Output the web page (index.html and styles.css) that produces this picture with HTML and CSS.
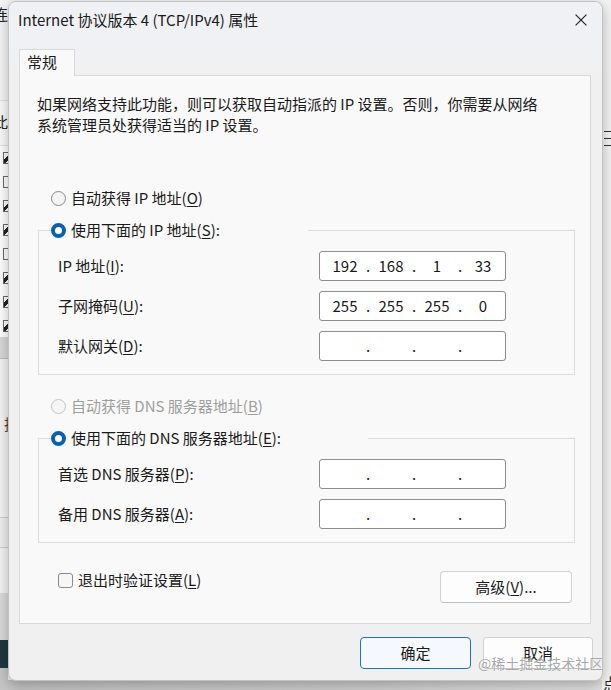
FILE: index.html
```html
<!DOCTYPE html>
<html lang="zh-CN">
<head>
<meta charset="utf-8">
<title>Internet 协议版本 4 (TCP/IPv4) 属性</title>
<link rel="stylesheet" href="styles.css">
</head>
<body>
<div class="desktop">
  <div class="back-bottom"></div>
  <div class="back-left">
    <div class="seg seg-a"><span class="frag frag-lian">连</span></div>
    <div class="seg seg-b"><span class="frag frag-ci">此</span></div>
    <div class="seg seg-c">
      <div class="cb-item"><span class="mini-cb on"></span></div>
      <div class="cb-item"><span class="mini-cb"></span></div>
      <div class="cb-item"><span class="mini-cb on"></span></div>
      <div class="cb-item"><span class="mini-cb on"></span></div>
      <div class="cb-item"><span class="mini-cb"></span></div>
      <div class="cb-item"><span class="mini-cb on"></span></div>
      <div class="cb-item"><span class="mini-cb on"></span></div>
      <div class="cb-item"><span class="mini-cb on"></span></div>
    </div>
    <div class="seg seg-d"></div>
    <div class="seg seg-e"></div>
    <div class="seg seg-f"><span class="frag frag-ji">技</span></div>
    <div class="seg seg-g"></div>
    <div class="seg seg-h"></div>
    <div class="seg seg-i"></div>
    <div class="seg seg-j"></div>
    <div class="seg seg-k"></div>
    <div class="seg seg-l"></div>
  </div>
  <div class="back-right">
    <div class="menu-lines"><span></span><span></span><span></span></div>
    <div class="frag-dian">点</div>
  </div>

  <div class="window">
    <div class="titlebar">
      <span class="title">Internet 协议版本 4 (TCP/IPv4) 属性</span>
      <svg class="close" width="12" height="12" viewBox="0 0 12 12"><path d="M0.6 0.6 L11.4 11.4 M11.4 0.6 L0.6 11.4" stroke="#1a1a1a" stroke-width="1.1" fill="none"/></svg>
    </div>
    <div class="content">
      <div class="tabs"><div class="tab">常规</div></div>
      <div class="panel">
        <p class="desc">如果网络支持此功能，则可以获取自动指派的 IP 设置。否则，你需要从网络<br>系统管理员处获得适当的 IP 设置。</p>

        <div class="radio-row first"><span class="radio"></span><span>自动获得 IP 地址(<u>O</u>)</span></div>

        <fieldset class="group">
          <legend class="legend legend-ip"><span class="radio checked"></span><span>使用下面的 IP 地址(<u>S</u>):</span></legend>
          <div class="rows">
            <div class="field-label">IP 地址(<u>I</u>):</div>
            <div class="ipbox"><span class="seg-n">192</span><span class="dot">.</span><span class="seg-n">168</span><span class="dot">.</span><span class="seg-n">1</span><span class="dot">.</span><span class="seg-n">33</span></div>
            <div class="field-label">子网掩码(<u>U</u>):</div>
            <div class="ipbox"><span class="seg-n">255</span><span class="dot">.</span><span class="seg-n">255</span><span class="dot">.</span><span class="seg-n">255</span><span class="dot">.</span><span class="seg-n">0</span></div>
            <div class="field-label">默认网关(<u>D</u>):</div>
            <div class="ipbox"><span class="seg-n"></span><span class="dot">.</span><span class="seg-n"></span><span class="dot">.</span><span class="seg-n"></span><span class="dot">.</span><span class="seg-n"></span></div>
          </div>
        </fieldset>

        <div class="radio-row second disabled"><span class="radio"></span><span>自动获得 DNS 服务器地址(<u>B</u>)</span></div>

        <fieldset class="group group-dns">
          <legend class="legend legend-dns"><span class="radio checked"></span><span>使用下面的 DNS 服务器地址(<u>E</u>):</span></legend>
          <div class="rows">
            <div class="field-label">首选 DNS 服务器(<u>P</u>):</div>
            <div class="ipbox"><span class="seg-n"></span><span class="dot">.</span><span class="seg-n"></span><span class="dot">.</span><span class="seg-n"></span><span class="dot">.</span><span class="seg-n"></span></div>
            <div class="field-label">备用 DNS 服务器(<u>A</u>):</div>
            <div class="ipbox"><span class="seg-n"></span><span class="dot">.</span><span class="seg-n"></span><span class="dot">.</span><span class="seg-n"></span><span class="dot">.</span><span class="seg-n"></span></div>
          </div>
        </fieldset>

        <div class="bottom-row">
          <div class="check-label"><span class="checkbox"></span><span>退出时验证设置(<u>L</u>)</span></div>
          <button class="btn btn-adv" type="button">高级(<u>V</u>)...</button>
        </div>
      </div>
    </div>
    <div class="footer">
      <button class="btn btn-ok" type="button">确定</button>
      <button class="btn btn-cancel" type="button">取消</button>
    </div>
  </div>

  <div class="watermark">@稀土掘金技术社区</div>
</div>
</body>
</html>
```
FILE: styles.css
```css
* { box-sizing: border-box; }
html, body { margin: 0; padding: 0; }
body {
  font-family: "Noto Sans CJK SC", "Noto Sans", sans-serif;
  font-size: 15px;
  color: #1a1a1a;
  background: #f3f3f3;
}
u { text-decoration: underline; text-underline-offset: 2px; text-decoration-thickness: 1px; }

.desktop {
  position: relative;
  width: 611px;
  height: 690px;
  overflow: hidden;
  background: #f3f3f3;
}

/* ---------- background windows ---------- */
.back-bottom {
  position: absolute;
  left: 0; bottom: 0;
  width: 611px; height: 10px;
  background: linear-gradient(to right, #c4c4c4, #cfcfcf 60%, #e2e2e2);
}
.back-left {
  position: absolute;
  left: 0; top: 0;
  width: 8px; height: 690px;
  display: flex;
  flex-direction: column;
  overflow: hidden;
}
.seg { flex: none; overflow: hidden; }
.seg-a { height: 100px; background: #f6f6f6; padding-top: 4px; }
.seg-b { height: 45px; background: #fafafa; border-top: 1px solid #e0e0e0; padding-top: 11px; }
.seg-c { height: 192px; background: #fff; border-top: 1px solid #e0e0e0; }
.seg-d { height: 21px; background: #d9d9d9; }
.seg-e { height: 52px; background: #f4f4f4; border-top: 1px solid #bdbdbd; }
.seg-f { height: 30px; background: #f4f4f4; padding-top: 4px; }
.seg-g { height: 77px; background: #f4f4f4; }
.seg-h { height: 30px; background: #efefef; border-top: 1px solid #cfcfcf; }
.seg-i { height: 46px; background: #f4f4f4; border-top: 1px solid #cfcfcf; }
.seg-j { height: 47px; background: #dadada; }
.seg-k { height: 28px; background: #1f3a3f; }
.seg-l { height: 22px; background: #c6c6c6; }
.frag { display: block; white-space: nowrap; line-height: 20px; font-size: 15px; color: #222; }
.frag-lian, .frag-ci { margin-left: -7px; }
.frag-ji { margin-left: 4px; color: #5a3a1a; }
.cb-item { height: 24px; display: flex; align-items: center; }
.mini-cb {
  display: block;
  width: 12px; height: 12px;
  margin-left: 3px;
  border: 1px solid #6a6a6a;
  background: #fff;
  flex: none;
}
.mini-cb.on { background: linear-gradient(135deg, #fff 30%, #222 30%, #222 55%, #fff 55%); }

.back-right {
  position: absolute;
  right: 0; top: 0;
  width: 9px; height: 690px;
  display: flex;
  flex-direction: column;
  background: #f4f4f4;
}
.menu-lines {
  margin-top: 131px;
  margin-left: 2px;
  display: flex;
  flex-direction: column;
  gap: 6px;
}
.menu-lines span { display: block; height: 1px; background: #333; width: 10px; }
.frag-dian {
  margin-top: auto;
  margin-left: 1px;
  line-height: 18px;
  height: 16px;
  font-size: 15px;
  white-space: nowrap;
  color: #222;
}

/* ---------- dialog window ---------- */
.window {
  position: absolute;
  left: 8px; top: 1px;
  width: 595px; height: 680px;
  border: 1px solid #c2c2c2;
  border-radius: 8px;
  background: #f0f0f0;
  box-shadow: 0 4px 14px rgba(0, 0, 0, 0.28);
  display: flex;
  flex-direction: column;
  overflow: hidden;
}
.titlebar {
  height: 36px;
  flex: none;
  display: flex;
  align-items: center;
  padding-left: 9px;
  background: #eff1f4;
}
.title { line-height: 20px; white-space: nowrap; }
.close { margin-left: auto; margin-right: 15px; flex: none; }

.content {
  flex: none;
  padding: 11px 11px 0 10px;
  display: flex;
  flex-direction: column;
  background: linear-gradient(#eff1f4, #f0f0f0 40px);
}
.tabs { display: flex; position: relative; z-index: 1; margin-bottom: -1px; }
.tab {
  height: 27px;
  padding: 0 17px 0 7px;
  border: 1px solid #d9d9d9;
  border-bottom: none;
  background: #f9f9f9;
  line-height: 24px;
}
.panel {
  height: 549px;
  border: 1px solid #d9d9d9;
  background: #f9f9f9;
  padding-top: 17px;
}
.desc {
  margin: 0 0 0 17px;
  line-height: 21px;
  white-space: nowrap;
}

.radio-row {
  display: flex;
  align-items: center;
  gap: 5px;
  height: 22px;
  margin-left: 31px;
  line-height: 20px;
}
.radio-row.first { margin-top: 52px; }
.radio-row.second { margin-top: 20px; }
.radio-row.disabled { color: #9e9e9e; }
.radio-row.disabled .radio { border-color: #c4c4c4; background: #f6f6f6; }

.radio {
  display: block;
  flex: none;
  width: 15px; height: 15px;
  border-radius: 50%;
  border: 1px solid #8a8a8a;
  background: #f4f4f4;
}
.radio.checked {
  border: 4px solid #0560b6;
  background: #fff;
}

.group {
  margin: 10px 15px 0 18px;
  padding: 0;
  border: 1px solid #dcdcdc;
  min-width: 0;
}
.legend {
  display: flex;
  align-items: center;
  gap: 5px;
  height: 22px;
  padding: 0;
  margin-left: 12px;
  line-height: 20px;
}
.legend-ip { width: 257px; }
.legend-dns { width: 317px; }

.rows {
  display: grid;
  grid-template-columns: 261px 187px;
  grid-auto-rows: 30px;
  row-gap: 10px;
  align-items: center;
  padding: 10px 0 13px 19px;
}
.field-label { line-height: 20px; white-space: nowrap; }
.ipbox {
  display: flex;
  align-items: center;
  width: 187px;
  height: 30px;
  padding-left: 5px;
  border: 1px solid #8c8c8c;
  border-radius: 3px;
  background: #fff;
  line-height: 20px;
}
.seg-n { width: 40px; text-align: center; }
.dot { width: 6px; text-align: center; }

.bottom-row {
  display: flex;
  justify-content: space-between;
  align-items: flex-start;
  margin: 27px 18px 0 38px;
}
.check-label {
  display: flex;
  align-items: center;
  gap: 5px;
  height: 20px;
  line-height: 20px;
}
.checkbox {
  display: block;
  flex: none;
  width: 15px; height: 15px;
  border: 1px solid #8a8a8a;
  border-radius: 3px;
  background: #f6f6f6;
}

.btn {
  font: inherit;
  color: #1a1a1a;
  height: 32px;
  padding: 0;
  border: 1px solid #d2d2d2;
  border-bottom-color: #c0c0c0;
  border-radius: 4px;
  background: #fdfdfd;
  line-height: 20px;
}
.btn-adv { width: 132px; margin-top: 1px; }

.footer {
  flex: none;
  display: flex;
  justify-content: flex-end;
  gap: 12px;
  padding: 13px 9px 0 0;
}
.btn-ok { width: 111px; border: 1px solid #1a73c6; background: #f5f8fc; }
.btn-cancel { width: 110px; }

.watermark {
  position: absolute;
  left: 478px; top: 654px;
  font-size: 14px;
  line-height: 18px;
  color: rgba(140, 140, 140, 0.75);
  white-space: nowrap;
  text-shadow: 0 0 1px rgba(255, 255, 255, 0.8);
}
```
